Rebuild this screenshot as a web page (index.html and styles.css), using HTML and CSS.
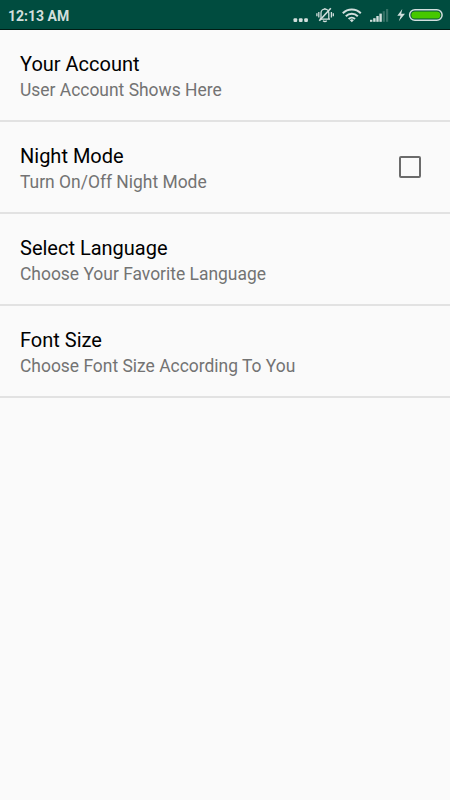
FILE: index.html
```html
<!DOCTYPE html>
<html lang="en">
<head>
<meta charset="utf-8">
<title>Settings</title>
<link rel="stylesheet" href="styles.css">
</head>
<body>
<header class="status">
  <span class="time">12:13 AM</span>
  <svg class="icons" width="157" height="29" viewBox="0 0 157 29" fill="none" stroke="#d2dfdd">
    <g fill="#d2dfdd" stroke="none">
      <rect x="0.5" y="18.2" width="3.7" height="3.7" rx="1"/>
      <rect x="5.9" y="18.2" width="3.7" height="3.7" rx="1"/>
      <rect x="11.2" y="18.2" width="3.7" height="3.7" rx="1"/>
    </g>
    <g stroke-width="1.3">
      <path d="M26.6 19.2h10.4M28 19v-6a3.9 3.9 0 0 1 7.8 0v6M31.9 9.2v-1.2M30 20.8q1.9 1.4 3.8 0M25.8 12v5.5M38.4 12v5.5M23.9 13.3v3M40.3 13.3v3"/>
      <path d="M26.3 20.8L37.8 8.2" stroke-width="1.6"/>
    </g>
    <g stroke-width="2">
      <path d="M49.8 13.2a12.8 12.8 0 0 1 18 0M52.8 16.2a8.5 8.5 0 0 1 12 0M55.6 18.9a4.7 4.7 0 0 1 6.4 0"/>
      <path d="M58.8 22.2l-2-2a3 3 0 0 1 4 0z" fill="#d2dfdd" stroke="none"/>
    </g>
    <g fill="#d2dfdd" stroke="none">
      <rect x="77" y="19.8" width="2.4" height="2"/>
      <rect x="80.2" y="18.2" width="2.4" height="3.6"/>
      <rect x="83.3" y="16" width="2.4" height="5.8"/>
      <rect x="86.4" y="13.6" width="2.4" height="8.2"/>
      <rect x="89.7" y="11.2" width="2.2" height="10.6" opacity=".25"/>
      <rect x="93" y="9" width="2.2" height="12.8" opacity=".25"/>
      <path d="M109.3 9l-5 6.7h3.4l-1.9 5.6 6.2-7.5h-3.8z"/>
    </g>
    <rect x="116.6" y="9.7" width="32.5" height="10.6" rx="5.3" stroke-width="1.5"/>
    <rect x="118.3" y="11.4" width="29.1" height="7.2" rx="3.6" fill="#46c800" stroke="none"/>
  </svg>
</header>
<main>
  <section class="row">
    <div><h2>Your Account</h2><p>User Account Shows Here</p></div>
  </section>
  <section class="row">
    <div><h2>Night Mode</h2><p>Turn On/Off Night Mode</p></div>
    <span class="check" role="checkbox" aria-checked="false"></span>
  </section>
  <section class="row">
    <div><h2>Select Language</h2><p>Choose Your Favorite Language</p></div>
  </section>
  <section class="row">
    <div><h2>Font Size</h2><p>Choose Font Size According To You</p></div>
  </section>
</main>
</body>
</html>
```
FILE: styles.css
```css
* { box-sizing: border-box; }
body {
  margin: 0;
  min-height: 800px;
  background: #fafafa;
  font-family: Roboto, sans-serif;
}
.status {
  display: flex;
  justify-content: space-between;
  height: 30px;
  background: #004c3f;
  border-bottom: 1px solid #001d15;
  color: #d2dfdd;
}
.time {
  padding-left: 8px;
  font-size: 14px;
  font-weight: 700;
  line-height: 32px;
}
.icons { display: block; }
.row {
  display: flex;
  align-items: flex-start;
  justify-content: space-between;
  height: 92px;
  padding: 21px 29px 0 20px;
  border-bottom: 2px solid #e2e2e2;
}
h2, p { margin: 0; font-weight: 400; }
h2 {
  color: #000;
  font-size: 20px;
  line-height: 26px;
}
p {
  color: #737373;
  font-size: 17.45px;
  line-height: 26px;
}
.check {
  width: 22px;
  height: 22px;
  margin-top: 13px;
  border: 2px solid #6b6b6b;
  border-radius: 2px;
}
```
